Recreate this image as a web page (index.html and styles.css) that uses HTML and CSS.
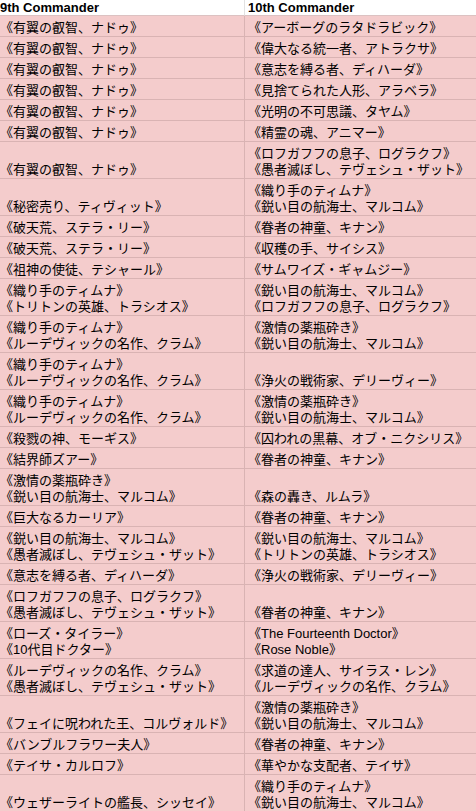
FILE: index.html
```html
<!DOCTYPE html>
<html lang="ja">
<head>
<meta charset="utf-8">
<title>Commander</title>
<link rel="stylesheet" href="styles.css">
</head>
<body>
<table class="sheet">
<thead>
<tr class="head"><th class="c1">9th Commander</th><th class="c2">10th Commander</th></tr>
</thead>
<tbody>
<tr><td class="c1">《有翼の叡智、ナドゥ》</td><td class="c2">《アーボーグのラタドラビック》</td></tr>
<tr><td class="c1">《有翼の叡智、ナドゥ》</td><td class="c2">《偉大なる統一者、アトラクサ》</td></tr>
<tr><td class="c1">《有翼の叡智、ナドゥ》</td><td class="c2">《意志を縛る者、ディハーダ》</td></tr>
<tr><td class="c1">《有翼の叡智、ナドゥ》</td><td class="c2">《見捨てられた人形、アラベラ》</td></tr>
<tr><td class="c1">《有翼の叡智、ナドゥ》</td><td class="c2">《光明の不可思議、タヤム》</td></tr>
<tr><td class="c1">《有翼の叡智、ナドゥ》</td><td class="c2">《精霊の魂、アニマー》</td></tr>
<tr><td class="c1">《有翼の叡智、ナドゥ》</td><td class="c2">《ロフガフフの息子、ログラクフ》<br>《愚者滅ぼし、テヴェシュ・ザット》</td></tr>
<tr><td class="c1">《秘密売り、ティヴィット》</td><td class="c2">《織り手のティムナ》<br>《鋭い目の航海士、マルコム》</td></tr>
<tr><td class="c1">《破天荒、ステラ・リー》</td><td class="c2">《眷者の神童、キナン》</td></tr>
<tr><td class="c1">《破天荒、ステラ・リー》</td><td class="c2">《収穫の手、サイシス》</td></tr>
<tr><td class="c1">《祖神の使徒、テシャール》</td><td class="c2">《サムワイズ・ギャムジー》</td></tr>
<tr><td class="c1">《織り手のティムナ》<br>《トリトンの英雄、トラシオス》</td><td class="c2">《鋭い目の航海士、マルコム》<br>《ロフガフフの息子、ログラクフ》</td></tr>
<tr><td class="c1">《織り手のティムナ》<br>《ルーデヴィックの名作、クラム》</td><td class="c2">《激情の薬瓶砕き》<br>《鋭い目の航海士、マルコム》</td></tr>
<tr><td class="c1">《織り手のティムナ》<br>《ルーデヴィックの名作、クラム》</td><td class="c2">《浄火の戦術家、デリーヴィー》</td></tr>
<tr><td class="c1">《織り手のティムナ》<br>《ルーデヴィックの名作、クラム》</td><td class="c2">《激情の薬瓶砕き》<br>《鋭い目の航海士、マルコム》</td></tr>
<tr><td class="c1">《殺戮の神、モーギス》</td><td class="c2">《囚われの黒幕、オブ・ニクシリス》</td></tr>
<tr><td class="c1">《結界師ズアー》</td><td class="c2">《眷者の神童、キナン》</td></tr>
<tr><td class="c1">《激情の薬瓶砕き》<br>《鋭い目の航海士、マルコム》</td><td class="c2">《森の轟き、ルムラ》</td></tr>
<tr><td class="c1">《巨大なるカーリア》</td><td class="c2">《眷者の神童、キナン》</td></tr>
<tr><td class="c1">《鋭い目の航海士、マルコム》<br>《愚者滅ぼし、テヴェシュ・ザット》</td><td class="c2">《鋭い目の航海士、マルコム》<br>《トリトンの英雄、トラシオス》</td></tr>
<tr><td class="c1">《意志を縛る者、ディハーダ》</td><td class="c2">《浄火の戦術家、デリーヴィー》</td></tr>
<tr><td class="c1">《ロフガフフの息子、ログラクフ》<br>《愚者滅ぼし、テヴェシュ・ザット》</td><td class="c2">《眷者の神童、キナン》</td></tr>
<tr><td class="c1">《ローズ・タイラー》<br>《10代目ドクター》</td><td class="c2">《The Fourteenth Doctor》<br>《Rose Noble》</td></tr>
<tr><td class="c1">《ルーデヴィックの名作、クラム》<br>《愚者滅ぼし、テヴェシュ・ザット》</td><td class="c2">《求道の達人、サイラス・レン》<br>《ルーデヴィックの名作、クラム》</td></tr>
<tr><td class="c1">《フェイに呪われた王、コルヴォルド》</td><td class="c2">《激情の薬瓶砕き》<br>《鋭い目の航海士、マルコム》</td></tr>
<tr><td class="c1">《バンブルフラワー夫人》</td><td class="c2">《眷者の神童、キナン》</td></tr>
<tr><td class="c1">《テイサ・カルロフ》</td><td class="c2">《華やかな支配者、テイサ》</td></tr>
<tr><td class="c1">《ウェザーライトの艦長、シッセイ》</td><td class="c2">《織り手のティムナ》<br>《鋭い目の航海士、マルコム》</td></tr>
</tbody>
</table>
</body>
</html>
```
FILE: styles.css
```css
html, body {
  margin: 0;
  padding: 0;
  background: #ffffff;
  overflow: hidden;
}

.sheet {
  border-collapse: separate;
  border-spacing: 0;
  table-layout: fixed;
  width: 476px;
  font-family: "Liberation Sans", Arial, "Noto Sans CJK JP", sans-serif;
  font-size: 13px;
  color: #000000;
}

.sheet .c1 {
  width: 245px;
  padding-left: 0;
  border-right: 1px solid #d9b3b3;
}

.sheet .c2 {
  width: 231px;
  padding-left: 3px;
}

.sheet th,
.sheet td {
  box-sizing: border-box;
  text-align: left;
  vertical-align: bottom;
  white-space: nowrap;
  overflow: hidden;
}

.head th {
  font-weight: bold;
  line-height: 14px;
  padding-top: 1px;
  padding-bottom: 0;
  padding-right: 3px;
  background: #ffffff;
  border-bottom: 1px solid #dcc2c2;
}

.head th.c1 {
  border-right-color: #e2e2e2;
}

.sheet td {
  background: #f4cccc;
  line-height: 16px;
  padding-top: 4px;
  padding-bottom: 0;
  padding-right: 3px;
  border-bottom: 1px solid #d9b3b3;
}
```
